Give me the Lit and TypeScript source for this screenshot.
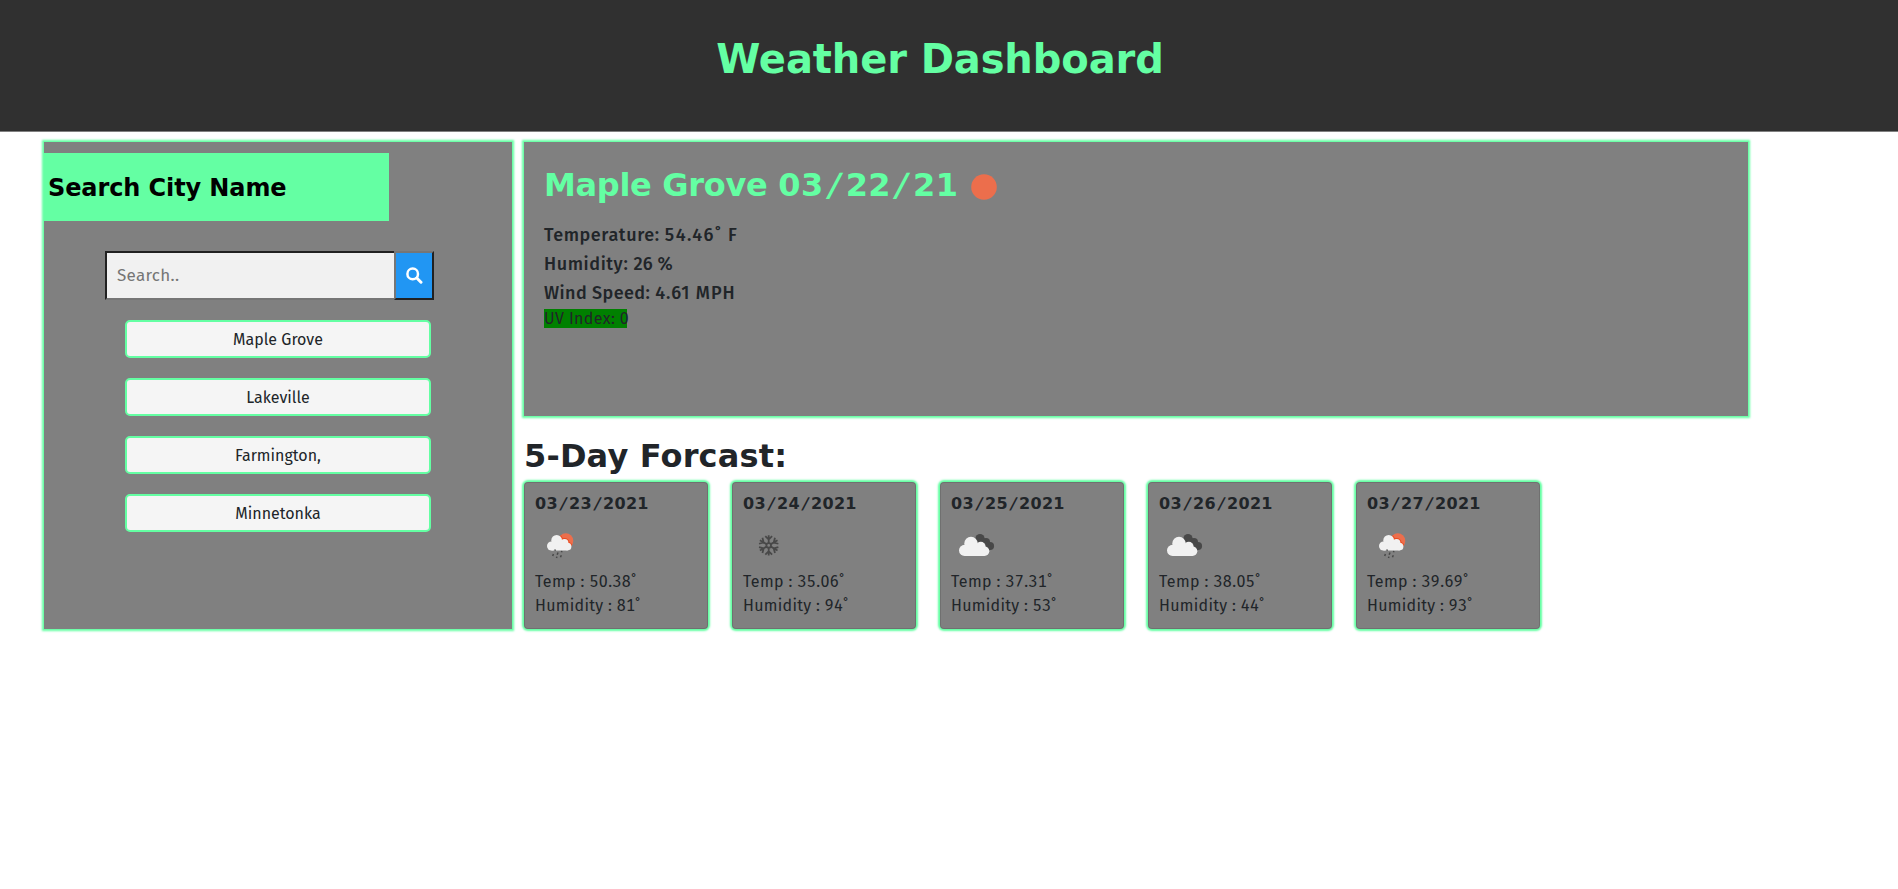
import { LitElement, html, css, svg } from "lit";
import { customElement, property } from "lit/decorators.js";

const cloud = svg`<g fill="#f1f1f1"><circle cx="13.600" cy="24.400" r="5.600"/><circle cx="20" cy="17.500" r="6.700"/><circle cx="29.800" cy="20.600" r="4.800"/><circle cx="33.500" cy="25.200" r="4.800"/><path d="M13.600 20L20 15L33.500 21V30H13.600z"/></g>`;
const rain = svg`<clipPath id="sun"><circle cx="30.800" cy="14.700" r="7.500"/></clipPath>
<circle cx="30.800" cy="14.700" r="7.500" fill="#ec6e4c"/>
<g clip-path="url(#sun)" fill="#ea4b20"><circle cx="21.700" cy="14.400" r="6.400"/><circle cx="29.600" cy="16.900" r="4.900"/><circle cx="32.600" cy="20.600" r="4.900"/></g>
<g transform="translate(5.560 .3) scale(.805)">${cloud}</g>
<path d="M20.300 23.500l-.4 1.300M18.400 28l-.7 2M23 26.600l-.8 2.200M26.900 25l-.4 1.300M21.900 30.600l-.4 1.400M26.300 29.300l-.8 2" stroke="#484848" stroke-width="1.500"/>`;
const snow = svg`<g fill="none" stroke="#484848" stroke-width="1.800">${[0, 60, 120, 180, 240, 300].map(
  (a) => svg`<path d="M25.700 17.400V9.200M22.300 10.200L25.700 13.600L29.100 10.200" transform="rotate(${a} 25.700 19.400)"/>`
)}<circle cx="25.700" cy="19.400" r="2.300"/></g>`;
const clouds = svg`<g fill="#484848"><circle cx="29" cy="12.500" r="4.600"/><circle cx="35" cy="16" r="4"/><circle cx="39" cy="20" r="4.100"/><path d="M27 14L33 12L41 22L38 24L33 23z"/></g>${cloud}`;
const glyphs: Record<string, unknown> = { rain, snow, clouds };

const wideDate = (d: string) =>
  html`<span class="digits">${d.split("/").map((p, i) => (i ? html`<span class="slash">/</span>${p}` : p))}</span>`;

@customElement("forecast-card")
class ForecastCard extends LitElement {
  @property() date = "";
  @property() icon = "rain";
  @property() temp = "";
  @property() humidity = "";
  static styles = css`
    :host { display: block; box-sizing: border-box; width: 184px; height: 147px; padding: 9px 10px 0;
      background: gray; border: 1px solid rgba(0, 0, 0, .125); border-radius: 4px; box-shadow: 0 0 2px 2px #64ffa3; }
    .date { font: bold 16px/24px "DejaVu Sans", sans-serif; white-space: nowrap; letter-spacing: .3px; }
    .slash { display: inline-block; padding: 0 2.500px; transform: skewX(-12deg); }
    svg { display: block; width: 50px; height: 50px; margin: 10px 0 -6px; overflow: visible; }
    .line { font-size: 16px; line-height: 24px; white-space: nowrap; font-variant-numeric: tabular-nums; }
    .temp { letter-spacing: .4px; }
    .humidity { letter-spacing: .3px; }
  `;
  render() {
    return html`<div class="date">${wideDate(this.date)}</div>
      <svg viewBox="0 0 50 50">${glyphs[this.icon]}</svg>
      <div class="line temp">Temp : ${this.temp}˚</div>
      <div class="line humidity">Humidity : ${this.humidity}˚</div>`;
  }
}

@customElement("app-root")
class AppRoot extends LitElement {
  cities = ["Maple Grove", "Lakeville", "Farmington,", "Minnetonka"];
  days = [
    ["03/23/2021", "rain", "50.38", "81"],
    ["03/24/2021", "snow", "35.06", "94"],
    ["03/25/2021", "clouds", "37.31", "53"],
    ["03/26/2021", "clouds", "38.05", "44"],
    ["03/27/2021", "rain", "39.69", "93"],
  ];
  static styles = css`
    :host { display: block; height: 889px; background: #fff; color: #212529; font: 16px/24px "Trebuchet MS", "Fira Sans", "Noto Sans", sans-serif; }
    * { box-sizing: border-box; }
    h1, h2, h3, p { margin: 0; }
    header { height: 132px; padding: 35px 18px 0 0; background: #303030; border-bottom: 1px solid gray; text-align: center; }
    h1, h2, h3 { font-family: "DejaVu Sans", sans-serif; font-weight: bold; white-space: nowrap; }
    h1 { font-size: 40px; line-height: 48px; color: #64ffa3; letter-spacing: -.1px; }
    main { display: flex; gap: 12px; padding: 10px 0 0 44px; }
    .panel { background: gray; box-shadow: 0 0 2px 2px #64ffa3; }
    .search { width: 468px; height: 487px; padding-top: 11px; }
    .search h3 { width: 345px; height: 68px; padding: 1px 4px 0; background: #64ffa3; color: #000; font-size: 24px; line-height: 68px; letter-spacing: -.1px; }
    form { display: flex; width: 329px; height: 49px; margin: 30px 0 20px 61px; }
    input { width: 289px; height: 49px; padding: 0 10px; border: 2px solid; border-color: #212121 #767676 #767676 #212121;
      border-right: 0; border-radius: 0; background: #f1f1f1; font: 17px "Trebuchet MS", "Fira Sans", "Noto Sans", sans-serif; letter-spacing: .3px; }
    input::placeholder { color: #757575; }
    form button { display: grid; place-items: center; width: 40px; height: 49px; padding: 0; background: #2196f3;
      border: 2px solid; border-color: #767676 #212121 #212121 #767676; }
    form svg { width: 17px; height: 17px; }
    .cities { display: grid; gap: 20px; width: 306px; margin-left: 81px; }
    .city { height: 38px; padding: 0; border: 2px solid #64ffa3; border-radius: 5px; background: #f5f5f5; color: #212529;
      font: 16px "Trebuchet MS", "Fira Sans", "Noto Sans", sans-serif; letter-spacing: 0; }
    .current { width: 1224px; height: 274px; padding: 24px 20px 0; }
    .title { display: flex; align-items: center; }
    .title h2 { font-size: 32px; line-height: 38px; color: #64ffa3; letter-spacing: -.3px; }
    .title .digits { letter-spacing: .45px; }
    .title .slash { display: inline-block; padding: 0 4.900px; transform: skewX(-12deg); }
    .title svg { width: 26px; height: 26px; margin: 4px 0 0 13px; }
    .stats { padding-top: 17px; font-size: 18px; font-weight: 500; line-height: 29px; }
    .t1 { letter-spacing: .6px; }
    .t1 span { letter-spacing: 1.450px; }
    .t2 { letter-spacing: .6px; }
    .t2 span { letter-spacing: .2px; }
    .t3 { letter-spacing: .43px; }
    .t3 span { letter-spacing: 1px; }
    .uv { display: block; width: 83px; height: 19px; margin-top: 1px; background: green; line-height: 19px; white-space: nowrap; letter-spacing: .4px; }
    .forecast h2 { height: 38px; margin: 21px 0 7px; font-size: 32px; line-height: 38px; letter-spacing: .17px; }
    .days { display: flex; gap: 24px; }
  `;
  render() {
    return html`<header><h1>Weather Dashboard</h1></header>
      <main>
        <section class="panel search">
          <h3>Search City Name</h3>
          <form>
            <input placeholder="Search.." />
            <button type="button" aria-label="Search">
              <svg viewBox="0 0 17 17" fill="none" stroke="#fff"><circle cx="6.700" cy="6.900" r="5.300" stroke-width="2.500"/><path d="M10.800 11L15 15.200" stroke-width="3" stroke-linecap="round"/></svg>
            </button>
          </form>
          <div class="cities">${this.cities.map((c) => html`<button class="city">${c}</button>`)}</div>
        </section>
        <div>
          <section class="panel current">
            <div class="title"><h2>Maple Grove ${wideDate("03/22/21")}</h2>
              <svg viewBox="0 0 26 26"><circle cx="13" cy="13" r="12.800" fill="#ec6e4c"/></svg></div>
            <div class="stats"><p class="t1">Temperature: <span>54.46˚ F</span></p><p class="t2">Humidity: <span>26 %</span></p><p class="t3">Wind Speed: <span>4.61 MPH</span></p></div>
            <span class="uv">UV Index: 0</span>
          </section>
          <section class="forecast">
            <h2>5-Day Forcast:</h2>
            <div class="days">${this.days.map(
              ([d, i, t, h]) => html`<forecast-card .date=${d} .icon=${i} .temp=${t} .humidity=${h}></forecast-card>`
            )}</div>
          </section>
        </div>
      </main>`;
  }
}
